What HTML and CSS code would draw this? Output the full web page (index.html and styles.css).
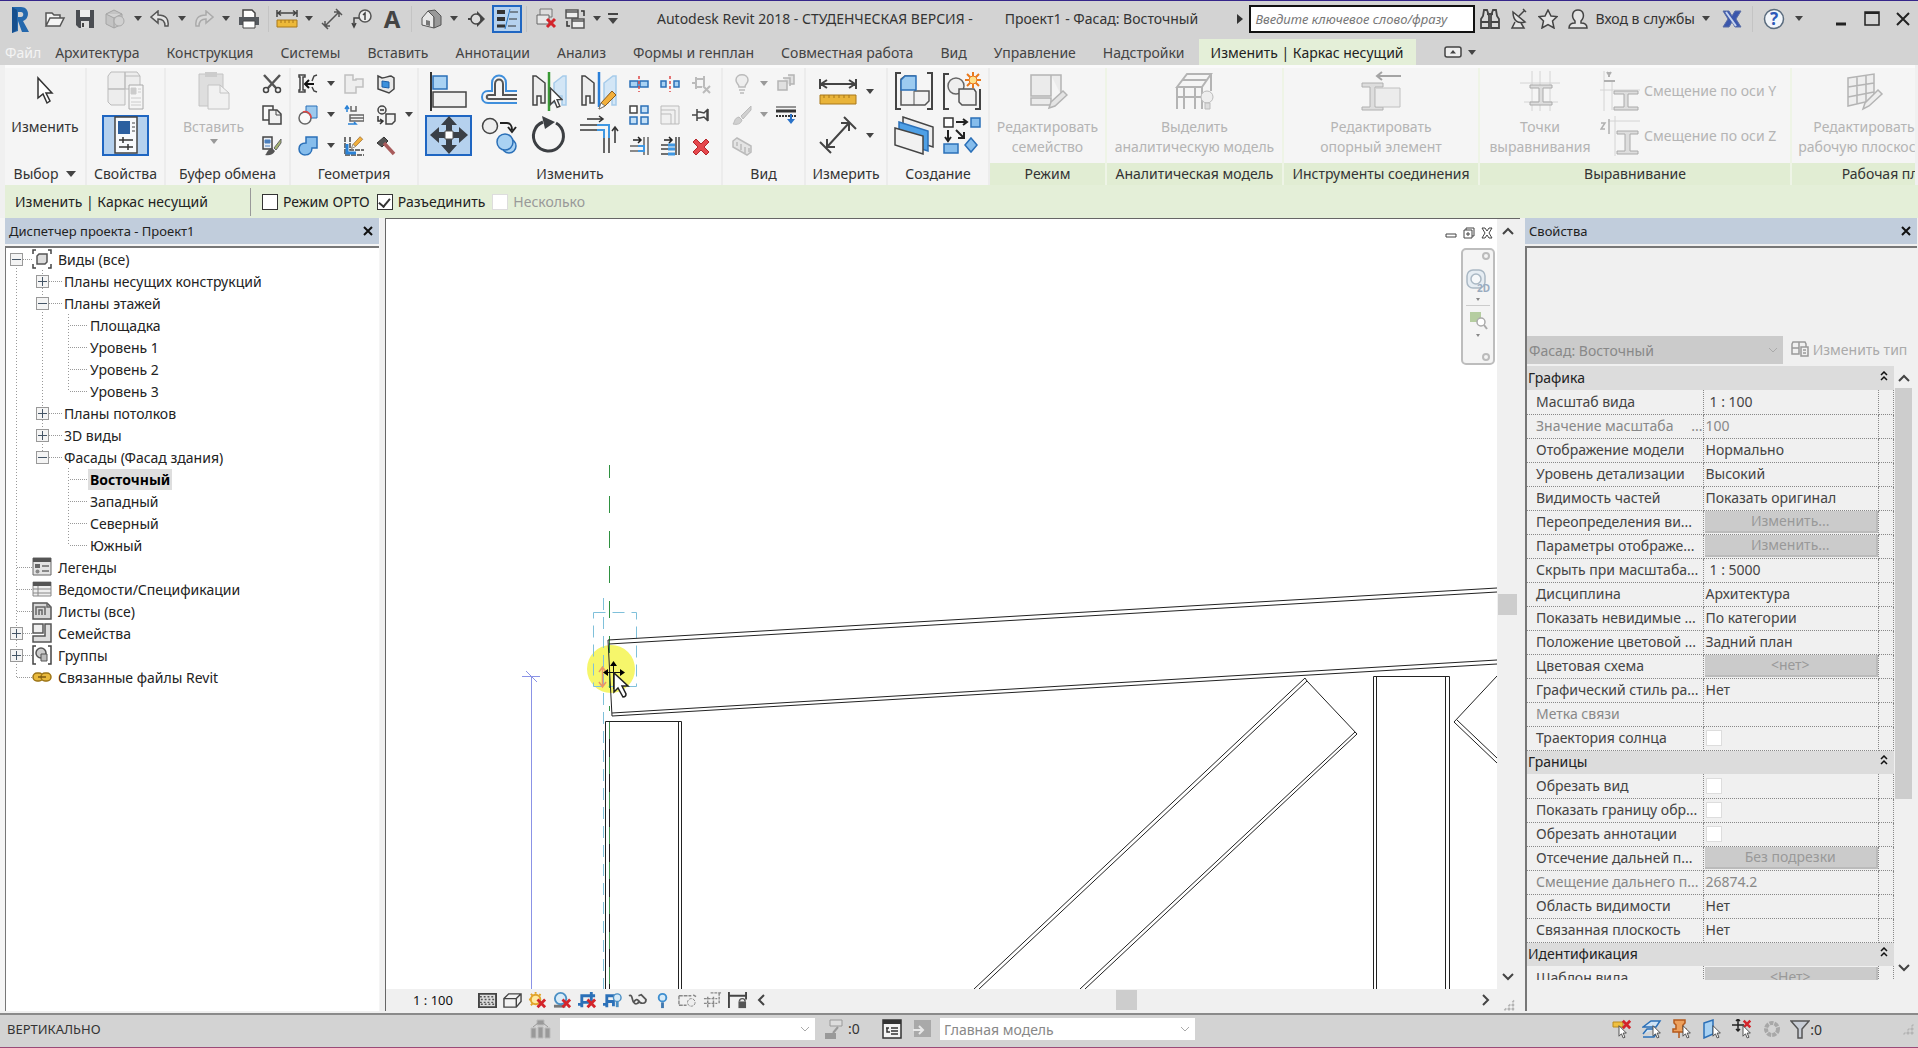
FILE: index.html
```
<!DOCTYPE html>
<html lang="ru">
<head>
    <meta charset="utf-8">
    <title>Autodesk Revit 2018</title>
    <link rel="stylesheet" href="styles.css">
</head>
<body>

<svg class="defs" aria-hidden="true">
    <symbol id="pointer" viewBox="0 0 12 20"><path d="M1 1v15l3.500-3.500 2.500 6 2.500-1-2.500-6h4.500z" fill="#fff" stroke="#444" stroke-width="1.300"/></symbol>
    <symbol id="cross" viewBox="0 0 12 12"><path d="M2 2l8 8M10 2l-8 8" stroke="#d3252b" stroke-width="3" fill="none"/></symbol>
    <symbol id="pencil" viewBox="0 0 20 20"><path d="M1 19l2-6L14 1l4 4L7 16z" fill="#f3b03c" stroke="#8a5a1c"/><path d="M1 19l2-6 4 3z" fill="#fff" stroke="#777"/></symbol>
</svg>

<header class="titlebar">
    <div class="quick">
        <button class="logo" aria-label="Revit"><svg width="20" height="30" viewBox="0 0 20 30"><path d="M2 3h9c9 0 9 12 2 14l6 11h-7L8 17v10l-6 2z" fill="#2468ad"/><path d="M8 8h3c3 0 3 5 0 5H8z" fill="#d3d3d3"/><path d="M2 3l5 3v20l-5 3z" fill="#174f8d"/></svg></button>
        <button aria-label="Открыть"><svg width="22" height="20" viewBox="0 0 22 20"><path d="M2 17V4h6l2 2h6v3M2 17l4-8h14l-4 8z" fill="#f4f4f4" stroke="#555" stroke-width="1.500"/></svg></button>
        <button aria-label="Сохранить"><svg width="20" height="20" viewBox="0 0 20 20"><path d="M1 1h18v18H4l-3-3z" fill="#4a4d52"/><path d="M5 1h10v7H5z" fill="#eee"/><path d="M6 12h8v7H6z" fill="#ddd"/><path d="M7 14h2v4H7z" fill="#444"/></svg></button>
        <button aria-label="Синхронизировать"><svg width="22" height="20" viewBox="0 0 22 20"><path d="M2 5l8-4 8 4v10l-8 4-8-4zM2 5l8 4 8-4M10 9v10" fill="#c4c4c4" stroke="#a4a4a4"/><circle cx="15" cy="12" r="5" fill="#d0d0d0" stroke="#aaa"/></svg></button>
        <button class="more" aria-label="Ещё"><i class="caret"></i></button>
        <button class="slim" aria-label="Отменить"><svg width="20" height="18" viewBox="0 0 20 18"><path d="M1 7l7-6v4c8 0 11 4 10 11h-3c0-5-2-7-7-7v4z" fill="#e4e4e4" stroke="#555" stroke-width="1.500"/></svg></button>
        <button class="more" aria-label="Ещё"><i class="caret"></i></button>
        <button class="slim" aria-label="Вернуть"><svg width="20" height="18" viewBox="0 0 20 18"><path d="M19 7l-7-6v4C4 5 1 9 2 16h3c0-5 2-7 7-7v4z" fill="#d8d8d8" stroke="#aaa" stroke-width="1.500"/></svg></button>
        <button class="more" aria-label="Ещё"><i class="caret"></i></button>
        <button aria-label="Печать"><svg width="22" height="20" viewBox="0 0 22 20"><path d="M5 8V1h9l3 3v4" fill="#fff" stroke="#444" stroke-width="1.500"/><path d="M1 8h20v8H1z" fill="#55595e"/><path d="M5 12h12v7H5z" fill="#fff" stroke="#444"/></svg></button>
        <i class="sep"></i>
        <button class="slim" aria-label="Измерить"><svg width="22" height="20" viewBox="0 0 22 20"><path d="M1 1v7M21 1v7M2 4h18M5 1.500L2 4l3 2.500M17 1.500L20 4l-3 2.500" stroke="#444" stroke-width="1.500" fill="none"/><path d="M1 11h20v7H1z" fill="#edb93a" stroke="#a9791b"/><path d="M5 11v3M9 11v3M13 11v3M17 11v3" stroke="#a9791b"/></svg></button>
        <button class="more" aria-label="Ещё"><i class="caret"></i></button>
        <button aria-label="Размер"><svg width="22" height="22" viewBox="0 0 22 22"><path d="M4 18L18 4M4 13v5h5M13 4h5v5M1 15l6 6M15 1l6 6" stroke="#555" stroke-width="1.500" fill="none"/></svg></button>
        <button aria-label="Марка"><svg width="22" height="20" viewBox="0 0 22 20"><circle cx="14" cy="7" r="6" fill="#eee" stroke="#555" stroke-width="1.500"/><path d="M12 6l2-2v7M8 9H3v8M1 14l2 4 2-4" fill="none" stroke="#444" stroke-width="1.500"/></svg></button>
        <button class="letter">A</button>
        <i class="sep"></i>
        <button aria-label="3D вид"><svg width="22" height="20" viewBox="0 0 22 20"><path d="M2 9l6-7 6 6v11l-12-3z" fill="#e8e8e8" stroke="#555"/><path d="M8 2l7-1 6 6v9l-7 3V8z" fill="#999" stroke="#555"/><path d="M6 11l4 1v5l-4-1z" fill="#777"/></svg></button>
        <button class="more" aria-label="Ещё"><i class="caret"></i></button>
        <button aria-label="Разрез"><svg width="20" height="18" viewBox="0 0 20 18"><path d="M10 1l8 8-8 8z" fill="#444"/><circle cx="9" cy="9" r="5" fill="#ddd" stroke="#444" stroke-width="1.500"/><path d="M1 9h3" stroke="#444" stroke-width="2"/></svg></button>
        <button class="on" aria-label="Тонкие линии"><svg width="24" height="22" viewBox="0 0 24 22"><path d="M2 4h8M2 11h8" stroke="#333" stroke-width="4"/><path d="M2 18h8" stroke="#333" stroke-width="3"/><path d="M15 4h8M14 11h8M13 18h8" stroke="#333"/><path d="M15 1l-5 20" stroke="#2475c4"/></svg></button>
        <i class="sep"></i>
        <button aria-label="Закрыть скрытые"><svg width="22" height="22" viewBox="0 0 22 22"><path d="M5 1h12v8H5z" fill="#ddd" stroke="#777"/><path d="M2 7h12v9H2z" fill="#e8e8e8" stroke="#666"/><use href="#cross" x="10" y="9" width="12" height="12"/></svg></button>
        <button class="slim" aria-label="Переключить окна"><svg width="22" height="22" viewBox="0 0 22 22"><path d="M2 2h12v8H2zM2 4h12" fill="#eee" stroke="#555" stroke-width="1.500"/><path d="M8 11h12v9H8zM8 13h12" fill="#eee" stroke="#555" stroke-width="1.500"/><path d="M17 3h3v5M3 13v5h3" fill="none" stroke="#333" stroke-width="1.500"/></svg></button>
        <button class="more" aria-label="Ещё"><i class="caret"></i></button>
        <button class="more" aria-label="Настройка панели"><i class="bar"></i><i class="caret big"></i></button>
    </div>
    <div class="caption"><span>Autodesk Revit 2018 - СТУДЕНЧЕСКАЯ ВЕРСИЯ -</span><span>Проект1 - Фасад: Восточный</span></div>
    <i class="play"></i>
    <input class="search" type="text" placeholder="Введите ключевое слово/фразу" aria-label="Поиск">
    <div class="service">
        <button aria-label="Найти"><svg width="20" height="22" viewBox="0 0 20 22"><path d="M3 8l1-6h3l2 6v12H1v-9zM17 8l-1-6h-3l-2 6v12h8v-9zM7 6h6M1 14h8M11 14h8" fill="#d8d8d8" stroke="#444" stroke-width="1.800"/></svg></button>
        <button aria-label="Центр связи"><svg width="18" height="22" viewBox="0 0 18 22"><path d="M3 4c0 9 5 12 12 10zM9 8l6-6M13 1l3 3M5 14l-3 6h12l-3-5" fill="#e4e4e4" stroke="#444" stroke-width="1.500"/></svg></button>
        <button aria-label="Избранное"><svg width="20" height="20" viewBox="0 0 20 20"><path d="M10 1l3 6 6 .6-4.500 4.400L16 19l-6-3.500L4 19l1.500-7L1 7.600 7 7z" fill="#e4e4e4" stroke="#444" stroke-width="1.500"/></svg></button>
        <button class="signin"><svg width="20" height="22" viewBox="0 0 20 22"><path d="M1 20c0-4 3-5 6-5v-2C3 9 4 2 10 2s7 7 3 11v2c3 0 6 1 6 5z" fill="#e4e4e4" stroke="#444" stroke-width="1.500"/></svg>Вход в службы<i class="caret"></i></button>
        <button aria-label="Exchange"><svg width="20" height="20" viewBox="0 0 20 20"><path d="M1 2h6l3 5 3-5h6l-5 8 5 8h-6l-3-5-3 5H1l5-8z" fill="#3b57ad" stroke="#5b6ea5"/><path d="M4 3l10 14" stroke="#c7d4ee" stroke-width="2"/></svg></button>
        <i class="sep"></i>
        <button aria-label="Справка"><svg width="22" height="22" viewBox="0 0 22 22"><circle cx="11" cy="11" r="9.500" fill="#f2f6fb" stroke="#5a6b7d" stroke-width="1.500"/><text class="q" x="11" y="17" text-anchor="middle">?</text></svg></button>
        <button class="more" aria-label="Ещё"><i class="caret"></i></button>
    </div>
    <div class="window">
        <button aria-label="Свернуть"><svg width="14" height="16" viewBox="0 0 14 16"><path d="M2 13h10" stroke="#222" stroke-width="3"/></svg></button>
        <button aria-label="Развернуть"><svg width="16" height="16" viewBox="0 0 16 16"><path d="M1 1h14v13H1z" fill="none" stroke="#222" stroke-width="1.500"/><path d="M1 2h14" stroke="#222" stroke-width="2"/></svg></button>
        <button aria-label="Закрыть"><svg width="16" height="16" viewBox="0 0 16 16"><path d="M2 2l12 12M14 2L2 14" stroke="#222" stroke-width="2"/></svg></button>
    </div>
</header>

<nav class="tabs">
    <a class="file" href="#">Файл</a>
    <a href="#">Архитектура</a>
    <a href="#">Конструкция</a>
    <a href="#">Системы</a>
    <a href="#">Вставить</a>
    <a href="#">Аннотации</a>
    <a href="#">Анализ</a>
    <a href="#">Формы и генплан</a>
    <a href="#">Совместная работа</a>
    <a href="#">Вид</a>
    <a href="#">Управление</a>
    <a href="#">Надстройки</a>
    <a class="current" href="#">Изменить | Каркас несущий</a>
    <button class="collapse" aria-label="Свернуть ленту"><svg width="18" height="12" viewBox="0 0 18 12"><rect x="1" y="1" width="16" height="10" rx="2" fill="#eee" stroke="#444" stroke-width="1.500"/><path d="M6 7.500h6L9 4z" fill="#444"/></svg><i class="caret"></i></button>
</nav>

<div class="ribbon">
    <section class="panel">
        <div class="body">
            <button class="large"><svg width="40" height="40" viewBox="0 0 40 40"><path d="M13 7v20l5-4 4 9 3-2-4-8h6z" fill="#fff" stroke="#333" stroke-width="1.500"/></svg>Изменить</button>
        </div>
        <h2>Выбор <i class="caret big"></i></h2>
    </section>

    <section class="panel">
        <div class="body">
            <div class="pair one">
                <button disabled aria-label="Свойства типа"><svg width="40" height="40" viewBox="0 0 40 40"><path d="M2 5l3-4h14v17H2zM19 1h12l3 4v13H19zM2 18h17v16H5l-3-3zM19 5h15" fill="#ededed" stroke="#bbb"/><path d="M23 14h14v24H23z" fill="#f5f5f5" stroke="#aaa"/><path d="M25 17h5v6h-5zM32 18h3M32 21h3M25 27h10M25 31h10M25 34h10" fill="#ccc" stroke="#ccc"/></svg></button>
                <button class="on" aria-label="Свойства"><svg width="40" height="40" viewBox="0 0 40 40"><path d="M9 2h22v36H9z" fill="#f7f9fb" stroke="#444" stroke-width="1.500"/><path d="M12 6h12v13H12z" fill="#2b5f9f"/><path d="M26 8h3M26 12h3M26 16h3" stroke="#444"/><path d="M13 25h14M17 22v6M13 32h14M22 29v6" stroke="#333" stroke-width="1.500"/></svg></button>
            </div>
        </div>
        <h2>Свойства</h2>
    </section>

    <section class="panel">
        <div class="body">
            <button class="large paste" disabled><svg width="40" height="40" viewBox="0 0 40 40"><path d="M5 3h24v32H5z" fill="#dedede" stroke="#c4c4c4"/><path d="M11 1h12v5H11z" fill="#ccc"/><path d="M14 14h12l9 8v16H14z" fill="#f1f1f1" stroke="#c4c4c4"/><path d="M26 14v8h9" fill="none" stroke="#c4c4c4"/></svg>Вставить<i class="caret"></i></button>
            <div class="small clip">
                <button aria-label="Вырезать"><svg viewBox="0 0 20 20"><path d="M2 1l12 13M18 1L6 14" stroke="#555" stroke-width="2.500"/><circle cx="4" cy="16" r="2.500" fill="none" stroke="#444" stroke-width="1.500"/><circle cx="16" cy="16" r="2.500" fill="none" stroke="#444" stroke-width="1.500"/></svg></button>
                <button aria-label="Копировать"><svg viewBox="0 0 20 20"><path d="M1 1h10v14H1z" fill="#f8f8f8" stroke="#444" stroke-width="1.500"/><path d="M7 5h8l4 4v10H7z" fill="#f0f0f0" stroke="#444" stroke-width="1.500"/><path d="M14 5v5h5" fill="none" stroke="#444"/></svg></button>
                <button aria-label="Копировать свойства"><svg viewBox="0 0 20 20"><path d="M1 1h9v12H1z" fill="#e8eef5" stroke="#444" stroke-width="1.500"/><path d="M3 4h5v3H3zM3 10h5" fill="#4a7fbd" stroke="#4a7fbd"/><path d="M3 19c2-1 2-6 7-7l3 3c-2 4-6 5-10 4z" fill="#555"/><path d="M12 12l7-9v4l-5 7z" fill="#a6b66f" stroke="#666"/></svg></button>
            </div>
        </div>
        <h2>Буфер обмена</h2>
    </section>

    <section class="panel">
        <div class="body">
            <div class="small geometry">
                <button aria-label="Подрезка"><svg viewBox="0 0 20 20"><path d="M1 1h6v2H5v13h2v2H1v-2h1V3H1zM19 1l-3 1-2 5M19 18l-3-1-2-4" fill="none" stroke="#444" stroke-width="1.500"/><path d="M16 10H8M11 6l-4 4 4 4" fill="none" stroke="#111" stroke-width="2"/></svg></button>
                <button aria-label="Ещё"><i class="caret"></i></button>
                <button disabled aria-label="Сопряжение"><svg viewBox="0 0 20 20"><path d="M1 1h8v5h3V5h7v8h-7v6H1z" fill="#eee" stroke="#c0c0c0" stroke-width="1.500"/></svg></button>
                <button aria-label="Разделить грань"><svg viewBox="0 0 20 20"><path d="M2 2l4 2c4 0 6-2 9-2l3 2v11l-5 4-11-4z" fill="#e8e8e8" stroke="#444" stroke-width="1.500"/><path d="M6 7l7 1v6l-7-1z" fill="#3c90dc" stroke="#1d5fa8"/></svg></button>
                <span></span>
                <button aria-label="Вырезать геометрию"><svg viewBox="0 0 20 20"><path d="M8 1h11v12H8z" fill="#9cc9ee" stroke="#2b70b8"/><circle cx="7" cy="13" r="6" fill="#fafafa" stroke="#666" stroke-width="1.500"/><path d="M5 7a6 6 0 018 6" fill="none" stroke="#e04747" stroke-width="1.500"/></svg></button>
                <button aria-label="Ещё"><i class="caret"></i></button>
                <button aria-label="Соединение стен"><svg viewBox="0 0 20 20"><path d="M7 1v5h5V1M6 10h14v6H6zM6 13h14" fill="none" stroke="#666" stroke-width="1.500"/><path d="M3 1v6M1 4l2-3 2 3M4 19h8l-2-2" fill="none" stroke="#2a82d6" stroke-width="1.500"/></svg></button>
                <button aria-label="Демонтаж"><svg viewBox="0 0 20 20"><circle cx="6" cy="5" r="4" fill="#eee" stroke="#444" stroke-width="1.500"/><path d="M4 5h4M2 11v5h4M4 14l3 2-3 3" fill="none" stroke="#333" stroke-width="1.500"/><path d="M10 9h9v7l-3 3h-6z" fill="#f2f2f2" stroke="#444" stroke-width="1.500"/></svg></button>
                <button aria-label="Ещё"><i class="caret"></i></button>
                <button aria-label="Соединить"><svg viewBox="0 0 20 20"><path d="M8 1h11v11h-5c0 9-13 9-13 1 0-4 3-6 7-6z" fill="#86bdec" stroke="#2b70b8" stroke-width="1.500"/></svg></button>
                <button aria-label="Ещё"><i class="caret"></i></button>
                <button aria-label="Обрезать"><svg viewBox="0 0 20 20"><path d="M1 1v18h19M6 1v13h14" fill="none" stroke="#444" stroke-width="1.500" stroke-dasharray="5 1"/><path d="M3 8v9h9" fill="none" stroke="#2a82d6" stroke-width="3"/><use href="#pencil" x="7" y="0" width="13" height="13"/></svg></button>
                <button aria-label="Снести"><svg viewBox="0 0 20 20"><path d="M1 7l7-6 4 4-6 6z" fill="#555" stroke="#333"/><path d="M8 7l10 11" stroke="#a85b5b" stroke-width="3.500"/></svg></button>
            </div>
        </div>
        <h2>Геометрия</h2>
    </section>

    <section class="panel modify">
        <div class="body">
            <div class="pair four">
                <button aria-label="Выровнять"><svg width="40" height="40" viewBox="0 0 40 40"><path d="M2 1v39" stroke="#333" stroke-width="2"/><path d="M4 5h14v13H4z" fill="#a9d2f3" stroke="#2b70b8" stroke-width="1.500"/><path d="M4 21h33v15H4z" fill="#f0f0f0" stroke="#444" stroke-width="1.500"/></svg></button>
                <button aria-label="Смещение"><svg width="40" height="40" viewBox="0 0 40 40"><path d="M38 20H27v-8c0-10-14-10-14 0v8H9c-8 0-8 12 0 12h29M38 28H10" fill="none" stroke="#3f8fdc" stroke-width="2"/><path d="M38 24H24V13c0-6-8-6-8 0v11h-6c-3 0-3 4 0 4h28" fill="none" stroke="#555" stroke-width="2"/></svg></button>
                <button aria-label="Зеркало - выбрать ось"><svg width="40" height="40" viewBox="0 0 40 40"><path d="M4 5h3l9 7v20h-4v-7H8v9H4z" fill="#eee" stroke="#444" stroke-width="1.500"/><path d="M37 5h-3l-9 7v20h4v-7h4v9h4z" fill="#d3e6f6" stroke="#a6cbea" stroke-width="1.500"/><path d="M20 1v39" stroke="#3a9a35" stroke-width="2.500"/><use href="#pointer" x="20" y="16" width="14" height="22"/></svg></button>
                <button aria-label="Зеркало - нарисовать ось"><svg width="40" height="40" viewBox="0 0 40 40"><path d="M3 5h3l9 7v20h-4v-7H7v9H3z" fill="#eee" stroke="#444" stroke-width="1.500"/><path d="M37 5h-3l-9 7v20h4v-7h4v9h4z" fill="#d3e6f6" stroke="#a6cbea" stroke-width="1.500"/><path d="M20 1v35" stroke="#2a7fd8" stroke-width="2.500"/><use href="#pencil" x="19" y="19" width="20" height="20"/></svg></button>
                <button class="on" aria-label="Переместить"><svg width="40" height="40" viewBox="0 0 40 40"><path d="M20 1l8 9h-5v6h-6v-6h-5zM20 39l8-9h-5v-6h-6v6h-5zM1 20l9-8v5h6v6h-6v5zM39 20l-9-8v5h-6v6h6v5z" fill="#3a3f46"/><path d="M16 16h8v8h-8z" fill="#fff" stroke="#555"/></svg></button>
                <button aria-label="Копировать"><svg width="40" height="40" viewBox="0 0 40 40"><circle cx="11" cy="11" r="7.500" fill="#eee" stroke="#444" stroke-width="1.500"/><path d="M21 8h7c3 0 5 3 5 7M29 12l4 5 4-5" fill="none" stroke="#222" stroke-width="2"/><circle cx="30" cy="31" r="7" fill="#a9d2f3" stroke="#2b70b8" stroke-width="1.500"/><circle cx="26" cy="27" r="8" fill="#a9d2f3" stroke="#2b70b8" stroke-width="1.500"/></svg></button>
                <button aria-label="Повернуть"><svg width="40" height="40" viewBox="0 0 40 40"><path d="M27 8a15 15 0 11-13-1" fill="none" stroke="#3c3f43" stroke-width="3"/><path d="M13 1l13 6-10 7z" fill="#3c3f43"/></svg></button>
                <button aria-label="Обрезать или удлинить"><svg width="40" height="40" viewBox="0 0 40 40"><path d="M1 10h19M1 15h17M25 22v16M30 22v16" fill="none" stroke="#666" stroke-width="2"/><path d="M18 10h12v13M18 15h7v8" fill="none" stroke="#3f97e2" stroke-width="2"/><path d="M8 4h16M20 1l4 3-4 3M36 28V12M33 16l3-4 3 4" fill="none" stroke="#333" stroke-width="1.500"/></svg></button>
            </div>
            <div class="small three">
                <button aria-label="Разделить"><svg viewBox="0 0 20 20"><path d="M1 7h8v6H1zM11 7h8v6h-8z" fill="#a9d2f3" stroke="#2b70b8" stroke-width="1.500"/><path d="M10 2v16" stroke="#e04747" stroke-width="1.500" stroke-dasharray="3 2"/></svg></button>
                <button aria-label="Разделить с зазором"><svg viewBox="0 0 20 20"><path d="M1 7h5v6H1zM14 7h5v6h-5z" fill="#a9d2f3" stroke="#2b70b8" stroke-width="1.500"/><path d="M10 2v16" stroke="#e04747" stroke-width="1.500" stroke-dasharray="3 2"/></svg></button>
                <button disabled aria-label="Открепить"><svg viewBox="0 0 20 20"><path d="M1 9h4M5 3v12M5 5h8M13 2v10M5 13h6M12 12l7 7M19 12l-7 7" fill="none" stroke="#bbb" stroke-width="2"/></svg></button>
                <button aria-label="Массив"><svg viewBox="0 0 20 20"><path d="M1 1h7v7H1z" fill="#fff" stroke="#444" stroke-width="1.500"/><path d="M12 1h7v7h-7zM1 12h7v7H1zM12 12h7v7h-7z" fill="#c4e0f7" stroke="#2b70b8" stroke-width="1.500"/></svg></button>
                <button disabled aria-label="Масштаб"><svg viewBox="0 0 20 20"><path d="M1 1h18v18H1z" fill="#f0f0f0" stroke="#bbb"/><path d="M1 9h10v10M1 5h14v14" fill="none" stroke="#bbb"/></svg></button>
                <button aria-label="Закрепить"><svg viewBox="0 0 20 20"><path d="M1 10h5M6 4v12M6 7h3l4 1 3-3v10l-3-3-4 1H6M17 4v12" fill="none" stroke="#444" stroke-width="1.500"/></svg></button>
                <button aria-label="Удлинить один"><svg viewBox="0 0 20 20"><path d="M1 10h10M1 15h10M15 1v18M19 1v18" stroke="#666" stroke-width="1.500"/><path d="M9 10h6v5H9" fill="none" stroke="#3f97e2" stroke-width="2"/><path d="M4 4h8M9 1l3 3-3 3" fill="none" stroke="#222" stroke-width="1.500"/></svg></button>
                <button aria-label="Удлинить несколько"><svg viewBox="0 0 20 20"><path d="M1 9h10M1 13h10M1 18h10M16 1v18M19 1v18" stroke="#444" stroke-width="1.500"/><path d="M8 9h7M8 13h7M8 18h7" fill="none" stroke="#3f97e2" stroke-width="3"/><path d="M4 4h8M9 1l3 3-3 3" fill="none" stroke="#222" stroke-width="1.500"/></svg></button>
                <button aria-label="Удалить"><svg viewBox="0 0 20 20"><path d="M5 3l5 5 5-5 3 3-5 5 5 5-3 3-5-5-5 5-3-3 5-5-5-5z" fill="#e5484d" stroke="#b5262b"/></svg></button>
            </div>
        </div>
        <h2>Изменить</h2>
    </section>

    <section class="panel">
        <div class="body">
            <div class="small view">
                <button disabled aria-label="Скрыть"><svg viewBox="0 0 20 20"><path d="M7 13c0-3-3-3-3-7 0-7 12-7 12 0 0 4-3 4-3 7zM7 16h6M8 19h4" fill="#eee" stroke="#bbb" stroke-width="1.500"/></svg></button>
                <button disabled aria-label="Ещё"><i class="caret"></i></button>
                <button disabled aria-label="Вытеснить"><svg viewBox="0 0 20 20"><path d="M2 7h9v9H2zM7 4h7v8M12 1h6v9h-4" fill="#e0e0e0" stroke="#b4b4b4" stroke-width="1.500"/></svg></button>
                <button disabled aria-label="Переопределить"><svg viewBox="0 0 20 20"><path d="M1 19c2-2 1-6 6-7l3 3c-1 4-5 5-9 4zM9 11L19 1v4l-8 9z" fill="#d0d0d0" stroke="#bbb"/></svg></button>
                <button disabled aria-label="Ещё"><i class="caret"></i></button>
                <button aria-label="Линии"><svg viewBox="0 0 20 20"><path d="M0 2h20" stroke="#333"/><path d="M0 6h20" stroke="#333" stroke-width="3"/><path d="M0 11h20" stroke="#333" stroke-width="2" stroke-dasharray="2 1"/><path d="M16 9v5h3l-4 5-4-5h3V9z" fill="#2a72c8"/></svg></button>
                <button disabled aria-label="Блок"><svg viewBox="0 0 20 20"><path d="M1 5l4-3 14 8v6l-4 3L1 11zM5 6v4M9 8v6M13 11v6M17 12v4" fill="#e4e4e4" stroke="#bbb" stroke-width="1.500"/></svg></button>
            </div>
        </div>
        <h2>Вид</h2>
    </section>

    <section class="panel">
        <div class="body">
            <div class="pair measure">
                <button aria-label="Измерить"><svg width="40" height="40" viewBox="0 0 40 40"><path d="M2 8v10M38 8v10M3 13h34M9 9l-6 4 6 4M31 9l6 4-6 4" fill="none" stroke="#444" stroke-width="2"/><path d="M2 24h36v9H2z" fill="#e9b43a" stroke="#a9791b"/><path d="M6 24v3M11 24v3M16 24v3M21 24v3M26 24v3M31 24v3" stroke="#a9791b"/></svg></button>
                <button aria-label="Ещё"><i class="caret"></i></button>
                <button aria-label="Размер"><svg width="40" height="40" viewBox="0 0 40 40"><path d="M9 32L31 8M9 24v8h8M23 8h8v8M2 27l11 11M26 2l12 12" fill="none" stroke="#444" stroke-width="2"/></svg></button>
                <button aria-label="Ещё"><i class="caret"></i></button>
            </div>
        </div>
        <h2>Измерить</h2>
    </section>

    <section class="panel">
        <div class="body">
            <div class="pair two">
                <button aria-label="Создать группу"><svg width="40" height="40" viewBox="0 0 40 40"><path d="M7 2H2v36h5M33 2h5v36h-5" fill="none" stroke="#444" stroke-width="2"/><path d="M7 8l4-3h10v15h14v10l-4 4H7z" fill="#f1f1f1" stroke="#555" stroke-width="1.500"/><path d="M7 9l4-4h11v14H7z" fill="#9ccbf0" stroke="#2b70b8" stroke-width="1.500"/><path d="M20 20v14" stroke="#555"/></svg></button>
                <button aria-label="Создать подобный"><svg width="40" height="40" viewBox="0 0 40 40"><path d="M7 3H2v35h5M33 38h5V18" fill="none" stroke="#444" stroke-width="2"/><circle cx="14" cy="15" r="8" fill="#eee" stroke="#666" stroke-width="1.500"/><path d="M17 18h15l2 3v13H20l-3-3z" fill="#f1f1f1" stroke="#555" stroke-width="1.500"/><path d="M31 1v16M23 9h16M25 3l12 12M37 3L25 15" stroke="#e8791d" stroke-width="2"/><circle cx="31" cy="9" r="4" fill="#ffe08a" stroke="#e8791d"/></svg></button>
                <button aria-label="Создать сборку"><svg width="40" height="40" viewBox="0 0 40 40"><path d="M9 2l30 10v20L9 22z" fill="#eee" stroke="#444" stroke-width="1.500"/><path d="M5 7l29 9v20L5 27z" fill="#4ea0e6" stroke="#2b70b8" stroke-width="1.500"/><path d="M1 13l28 8v18L1 30z" fill="#f1f1f1" stroke="#444" stroke-width="1.500"/></svg></button>
                <button aria-label="Создать части"><svg width="40" height="40" viewBox="0 0 40 40"><path d="M2 3h9v9H2z" fill="#fff" stroke="#333" stroke-width="1.500"/><path d="M29 3h9v9h-9zM2 29h14v9H2zM29 23l6 7-6 7-6-7z" fill="#86bdec" stroke="#2b70b8" stroke-width="1.500"/><path d="M14 7h11M21 4l4 3-4 3M6 15v10M3 22l3 4 3-4M14 15l8 8M22 17v6h-6" fill="none" stroke="#222" stroke-width="2"/></svg></button>
            </div>
        </div>
        <h2>Создание</h2>
    </section>

    <section class="panel context">
        <div class="body">
            <button class="large" disabled><svg width="40" height="40" viewBox="0 0 40 40"><path d="M3 4h20v21H3zM3 27h20v7H3zM23 4h10v20" fill="#ebebeb" stroke="#b4b4b4" stroke-width="1.500"/><path d="M21 37l2-6 12-11 4 4-12 11z" fill="#e4e4e4" stroke="#b4b4b4" stroke-width="1.500"/></svg>Редактировать<br>семейство</button>
        </div>
        <h2>Режим</h2>
    </section>

    <section class="panel context">
        <div class="body">
            <button class="large" disabled><svg width="40" height="40" viewBox="0 0 40 40"><path d="M2 16L12 3h24l-9 13zM2 16v22M9 16v22M20 16v22M27 16v22M36 3v17M2 26h25M8 9h24" fill="none" stroke="#b4b4b4" stroke-width="2"/><circle cx="32" cy="26" r="6" fill="#eee" stroke="#bbb"/><path d="M30 32h5v6h-5z" fill="#ddd" stroke="#bbb"/></svg>Выделить<br>аналитическую модель</button>
        </div>
        <h2>Аналитическая модель</h2>
    </section>

    <section class="panel context">
        <div class="body">
            <button class="large" disabled><svg width="40" height="40" viewBox="0 0 40 40"><path d="M17 5h23M21 1l-5 4 5 4" fill="none" stroke="#a4a4a4" stroke-width="2"/><path d="M1 12h21v4h-8v20h8v3H1v-3h8V16H1z" fill="#ddd" stroke="#b0b0b0"/><path d="M15 17h24v19H15" fill="#ececec" stroke="#c0c0c0"/></svg>Редактировать<br>опорный элемент</button>
        </div>
        <h2>Инструменты соединения</h2>
    </section>

    <section class="panel context">
        <div class="body">
            <button class="large points" disabled><svg width="40" height="40" viewBox="0 0 40 40"><path d="M12 0v40M20 0v40M30 0v40M0 12h40M4 31h34" stroke="#d4d4d4"/><path d="M10 14h22v3h-9v14h9v3H10v-3h9V17h-9z" fill="#ddd" stroke="#aaa"/></svg>Точки<br>выравнивания</button>
            <div class="offsets">
                <button disabled><svg width="40" height="40" viewBox="0 0 40 40"><path d="M4 0v40M0 19h40M12 9v30" stroke="#d4d4d4"/><path d="M4 10h11M9 1v5M7 1l2 3 2-3" stroke="#b0b0b0" stroke-width="2" fill="none"/><path d="M14 20h24v3H28v13h10v3H14v-3h10V23H14z" fill="#ddd" stroke="#aaa"/></svg>Смещение по оси Y</button>
                <button disabled><svg width="40" height="40" viewBox="0 0 40 40"><path d="M15 0v40M8 5h32" stroke="#d4d4d4"/><path d="M9 3v15M1 7h4l-4 6h4" stroke="#b0b0b0" stroke-width="1.500" fill="none"/><path d="M17 15h21v3h-8v17h8v3H17v-3h8V18h-8z" fill="#ddd" stroke="#aaa"/></svg>Смещение по оси Z</button>
            </div>
        </div>
        <h2>Выравнивание</h2>
    </section>

    <section class="panel context">
        <div class="body">
            <button class="large plane" disabled><svg width="40" height="40" viewBox="0 0 40 40"><path d="M4 7l26-4v26L4 35zM4 16l26-4M4 26l26-5M13 6v27M22 5v26" fill="#eee" stroke="#b4b4b4" stroke-width="1.500"/><path d="M19 38l2-6 13-13 4 4-13 12z" fill="#eee" stroke="#b4b4b4" stroke-width="1.500"/></svg>Редактировать<br>рабочую плоскость</button>
        </div>
        <h2>Рабочая плоскость</h2>
    </section>
</div>

<div class="options">
    <span class="mode">Изменить | Каркас несущий</span>
    <label><input type="checkbox"> Режим ОРТО</label>
    <label><input type="checkbox" checked> Разъединить</label>
    <label class="off"><input type="checkbox" disabled> Несколько</label>
</div>

<main class="workspace">
    <aside class="dock browser">
        <div class="dock-title">Диспетчер проекта - Проект1<button aria-label="Закрыть"><svg width="12" height="12" viewBox="0 0 12 12"><path d="M2 2l8 8M10 2L2 10" stroke="#111" stroke-width="2"/></svg></button></div>
        <div class="tree">
            <ul class="root">
                <li><div class="node"><button class="exp minus" aria-label="Свернуть"></button><i class="twig"></i><svg viewBox="0 0 20 20"><path d="M4 1H1v4M16 1h3v4M4 19H1v-4M16 19h3v-4" fill="none" stroke="#444" stroke-width="1.500"/><path d="M5 7l2-2h8v8l-2 2H5z" fill="#ddd" stroke="#555" stroke-width="1.500"/></svg><span>Виды (все)</span></div>
                    <ul class="second">
                        <li><div class="node"><button class="exp plus" aria-label="Развернуть"></button><i class="twig wide"></i><span>Планы несущих конструкций</span></div></li>
                        <li><div class="node"><button class="exp minus" aria-label="Свернуть"></button><i class="twig wide"></i><span>Планы этажей</span></div>
                            <ul class="third">
                                <li class="node"><span>Площадка</span></li>
                                <li class="node"><span>Уровень 1</span></li>
                                <li class="node"><span>Уровень 2</span></li>
                                <li class="node"><span>Уровень 3</span></li>
                            </ul>
                        </li>
                        <li><div class="node"><button class="exp plus" aria-label="Развернуть"></button><i class="twig wide"></i><span>Планы потолков</span></div></li>
                        <li><div class="node"><button class="exp plus" aria-label="Развернуть"></button><i class="twig wide"></i><span>3D виды</span></div></li>
                        <li><div class="node"><button class="exp minus" aria-label="Свернуть"></button><i class="twig wide"></i><span>Фасады (Фасад здания)</span></div>
                            <ul class="third">
                                <li class="node"><span class="picked">Восточный</span></li>
                                <li class="node"><span>Западный</span></li>
                                <li class="node"><span>Северный</span></li>
                                <li class="node"><span>Южный</span></li>
                            </ul>
                        </li>
                    </ul>
                </li>
                <li class="node"><i class="twig long"></i><svg viewBox="0 0 20 20"><path d="M1 1h18v17H1z" fill="#e4e4e4" stroke="#666"/><path d="M1 1h18v4H1z" fill="#555"/><path d="M3 7h5v4H3z" fill="#666"/><circle cx="5.500" cy="14.500" r="2" fill="#888"/><path d="M10 9h7M10 14h7" stroke="#888" stroke-width="2"/></svg><span>Легенды</span></li>
                <li class="node"><i class="twig long"></i><svg viewBox="0 0 20 20"><path d="M1 3h18v14H1zM1 10h18M1 14h18M6 6v11" fill="#eee" stroke="#888"/><path d="M1 3h18v4H1z" fill="#555"/></svg><span>Ведомости/Спецификации</span></li>
                <li class="node"><i class="twig long"></i><svg viewBox="0 0 20 20"><path d="M1 2h14l4 4v12H1z" fill="#d8d8d8" stroke="#555" stroke-width="1.500"/><path d="M4 14V6h9v8M7 14V9h3v5M15 2v4h4" fill="none" stroke="#666" stroke-width="1.500"/></svg><span>Листы (все)</span></li>
                <li class="node"><button class="exp plus" aria-label="Развернуть"></button><i class="twig"></i><svg viewBox="0 0 20 20"><path d="M1 1h10v9H1z" fill="#eee" stroke="#555" stroke-width="1.500"/><path d="M13 1h6v18H1v-6h12z" fill="#ddd" stroke="#555" stroke-width="1.500"/></svg><span>Семейства</span></li>
                <li class="node"><button class="exp plus" aria-label="Развернуть"></button><i class="twig"></i><svg viewBox="0 0 20 20"><path d="M4 1H1v18h3M16 1h3v18h-3" fill="none" stroke="#444" stroke-width="1.500"/><circle cx="9" cy="8" r="5" fill="#ccc" stroke="#555" stroke-width="1.500"/><path d="M9 9h6v7H9z" fill="#bbb" stroke="#555"/></svg><span>Группы</span></li>
                <li class="node"><i class="twig long"></i><svg viewBox="0 0 20 20"><rect x="1" y="6" width="10" height="8" rx="4" fill="#e8b93c" stroke="#9c7416" stroke-width="1.500"/><rect x="9" y="6" width="10" height="8" rx="4" fill="#e8b93c" stroke="#9c7416" stroke-width="1.500"/><path d="M6 10h8" stroke="#7c5a10" stroke-width="1.500"/></svg><span>Связанные файлы Revit</span></li>
            </ul>
        </div>
    </aside>

    <section class="view-window">
        <div class="canvas">
            <svg class="drawing" width="100%" height="100%">
                <g transform="translate(-386 -219)">
                    <circle cx="611" cy="669" r="24" fill="#f6f66b"/>
                    <!-- selection outline and reference axis -->
                    <g class="ghost">
                        <path d="M593.500 612.500h43v74h-43z"/>
                        <path d="M603.500 598v391"/>
                    </g>
                    <path class="axis" d="M609.500 465v246"/>
                    <path class="dim" d="M531.500 676v313M522 676.500h18M526 671l11 11"/>
                    <g class="lines">
                        <!-- top chord -->
                        <path d="M608 640l889-52M609 644l888-52M612 713l885-53M612 716l885-52M608 640l4 76"/>
                        <!-- posts -->
                        <path d="M605.500 989V721.500h76V989M609.500 722v267M678.500 722v267"/>
                        <path d="M1373.500 989V676.500h76V989M1376.500 677v312M1445.500 677v312"/>
                        <!-- braces -->
                        <path d="M974 989l331-311 2 3-328 308M1307 681l50 53-272 255M1080 989l275-257M1357 734l-2-2"/>
                        <path d="M1497 676l-43 46 43 41M1457 720l40 38"/>
                    </g>
                    <path d="M609.500 722v267" stroke="#3f8f4f" stroke-dasharray="17 18"/>
                    <path d="M602.500 668v18M599 672l3.500-5 3.500 5M599 682l3.500 5 3.500-5" fill="none" stroke="#e8946a" stroke-width="1.500"/>
                    <path d="M604 672.500h20M613.500 662v27" stroke="#111"/>
                    <path d="M608 669l-5 3.500 5 3.500zM620 669l5 3.500-5 3.500zM610 666l3.500-5 3.500 5z"/>
                    <path d="M614 673v19l4-4 5 9q3 0 3-3l-4-8h6z" fill="#fff" stroke="#222" stroke-width="1.500"/>
                </g>
            </svg>
            <div class="mdi">
                <svg width="12" height="12" viewBox="0 0 12 12"><path d="M1 7h10v3H1z" fill="#fff" stroke="#444"/></svg>
                <svg width="12" height="12" viewBox="0 0 12 12"><path d="M3 3V1h8v8H9M1 3h8v8H1zM4 6h2v2H4z" fill="#fff" stroke="#444"/></svg>
                <svg width="12" height="12" viewBox="0 0 12 12"><path d="M1 1h3l2 3 2-3h3L8 6l3 5H8L6 8l-2 3H1l3-5z" fill="#fff" stroke="#444"/></svg>
            </div>
            <div class="navbar">
                <i class="knob"></i>
                <svg width="26" height="26" viewBox="0 0 26 26"><rect x="2" y="2" width="18" height="18" rx="6" fill="#e6edf3" stroke="#aab8c4" stroke-width="1.500"/><circle cx="11" cy="11" r="5" fill="#f6f8fa" stroke="#aab8c4" stroke-width="1.500"/><text class="two" x="12" y="24">2D</text></svg>
                <i class="caret"></i>
                <hr>
                <svg width="20" height="20" viewBox="0 0 20 20"><path d="M2 2h11v10H2z" fill="#b5cda0"/><circle cx="13" cy="12" r="4" fill="#fff" stroke="#aaa" stroke-width="1.500"/><path d="M16 15l3 4" stroke="#aaa" stroke-width="2"/></svg>
                <i class="caret"></i>
                <i class="knob last"></i>
            </div>
        </div>
        <div class="vscroll"><svg width="12" height="8" viewBox="0 0 12 8"><path d="M1 7l5-5 5 5"/></svg><i class="thumb"></i><svg width="12" height="8" viewBox="0 0 12 8"><path d="M1 1l5 5 5-5"/></svg></div>
        <div class="viewbar">
            <span class="scale">1 : 100</span>
            <button aria-label="Уровень детализации"><svg viewBox="0 0 20 20"><path d="M1 3h18v14H1z" fill="#ddd" stroke="#444" stroke-width="2"/><path d="M2 6h16M3 9h16M2 12h16M3 14h16" stroke="#555" stroke-width="1.500" stroke-dasharray="2 2"/></svg></button>
            <button aria-label="Визуальный стиль"><svg viewBox="0 0 20 20"><path d="M1 8l5-5h13v8l-5 6H1zM1 8h13v9M14 8l5-5" fill="#f2f2f2" stroke="#444" stroke-width="1.500"/></svg></button>
            <button aria-label="Солнце"><svg viewBox="0 0 20 20"><circle cx="8" cy="9" r="5" fill="#ffe9a0" stroke="#e2a42a" stroke-width="2"/><path d="M8 1v2M1 9h2M3 3l2 2M13 3l-1 2M3 15l2-2" stroke="#e2a42a" stroke-width="2"/><use href="#cross" x="8" y="7" width="12" height="12"/></svg></button>
            <button aria-label="Тени"><svg viewBox="0 0 20 20"><path d="M1 16h12" stroke="#777" stroke-width="3"/><circle cx="8" cy="8" r="6" fill="#d8ebf8" stroke="#4a8fc4" stroke-width="2"/><use href="#cross" x="8" y="7" width="12" height="12"/></svg></button>
            <button aria-label="Обрезка"><svg viewBox="0 0 20 20"><path d="M4 17V5h14M4 12h10V5M14 1v4M0 14h4" fill="none" stroke="#2b70b8" stroke-width="3"/><use href="#cross" x="8" y="7" width="12" height="12"/></svg></button>
            <button aria-label="Граница"><svg viewBox="0 0 20 20"><path d="M4 17V5h9M4 11h7v5M0 14h4" fill="none" stroke="#2b70b8" stroke-width="3"/><circle cx="15" cy="7" r="4" fill="#d8ebf8" stroke="#4a8fc4" stroke-width="1.500"/><path d="M15 11v6" stroke="#4a8fc4" stroke-width="3"/></svg></button>
            <button aria-label="Изоляция"><svg viewBox="0 0 20 20"><path d="M1 5c4-2 3 5 5 7 2 3 6 1 5-2 2 4 8 4 8-1l-5-5-3 1M6 12c2-4 4-3 5-2" fill="none" stroke="#555" stroke-width="1.800"/></svg></button>
            <button aria-label="Скрытые элементы"><svg viewBox="0 0 20 20"><circle cx="10" cy="7" r="4" fill="#d8ebf8" stroke="#3f8fd0" stroke-width="2"/><path d="M10 12v6" stroke="#3f78b0" stroke-width="3"/></svg></button>
            <button aria-label="Временные свойства"><svg viewBox="0 0 20 20"><path d="M1 5h13M1 5v10h8M16 4l3 2" fill="none" stroke="#888" stroke-width="1.500" stroke-dasharray="4 1"/><circle cx="14" cy="12" r="4" fill="#eee" stroke="#888" stroke-dasharray="3 1"/></svg></button>
            <button aria-label="Аналитика"><svg viewBox="0 0 20 20"><path d="M1 8h14M1 13h14M5 6v12M11 6v12M8 2h11M17 2v12" fill="none" stroke="#888" stroke-width="1.500" stroke-dasharray="3 1"/></svg></button>
            <button aria-label="Ограничения"><svg viewBox="0 0 20 20"><path d="M1 1v17M19 1v8M1 5h18" fill="none" stroke="#444" stroke-width="2"/><path d="M11 11h8v7h-8z" fill="#555"/><path d="M12 11c0-4 6-4 6 0" fill="none" stroke="#555" stroke-width="1.500"/></svg></button>
            <svg class="arrow" width="8" height="12" viewBox="0 0 8 12"><path d="M7 1L2 6l5 5"/></svg>
            <div class="track"><i class="thumb"></i></div>
            <svg class="arrow" width="8" height="12" viewBox="0 0 8 12"><path d="M1 1l5 5-5 5"/></svg>
        </div>
        <div class="corner"><i class="grip"></i></div>
    </section>

    <aside class="dock properties">
        <div class="dock-title">Свойства<button aria-label="Закрыть"><svg width="12" height="12" viewBox="0 0 12 12"><path d="M2 2l8 8M10 2L2 10" stroke="#111" stroke-width="2"/></svg></button></div>
        <div class="props">
            <div class="type">
                <select disabled aria-label="Тип"><option>Фасад: Восточный</option></select>
                <button disabled><svg width="18" height="16" viewBox="0 0 18 16"><path d="M1 3l1-2h6v12H1zM8 1h6l1 2v3M1 7h7M10 6h7v9h-7zM12 9h3M12 12h3" fill="none" stroke="#999" stroke-width="1.500"/></svg>Изменить тип</button>
            </div>
            <div class="list">
                <div class="rows">
                    <table>
                        <colgroup><col class="c-name"><col><col class="c-mark"></colgroup>
                        <tr class="group"><th colspan="3">Графика<svg width="8" height="10" viewBox="0 0 8 10"><path d="M1 4l3-3 3 3M1 9l3-3 3 3"/></svg></th></tr>
                        <tr><td>Масштаб вида</td><td class="in">1 : 100</td><td></td></tr>
                        <tr class="off"><td><span class="split">Значение масштаба<b>...</b></span></td><td>100</td><td></td></tr>
                        <tr><td>Отображение модели</td><td>Нормально</td><td></td></tr>
                        <tr><td>Уровень детализации</td><td>Высокий</td><td></td></tr>
                        <tr><td>Видимость частей</td><td>Показать оригинал</td><td></td></tr>
                        <tr><td>Переопределения ви...</td><td><button disabled>Изменить...</button></td><td></td></tr>
                        <tr><td>Параметры отображе...</td><td><button disabled>Изменить...</button></td><td></td></tr>
                        <tr><td>Скрыть при масштаба...</td><td class="in">1 : 5000</td><td></td></tr>
                        <tr><td>Дисциплина</td><td>Архитектура</td><td></td></tr>
                        <tr><td>Показать невидимые ...</td><td>По категории</td><td></td></tr>
                        <tr><td>Положение цветовой ...</td><td>Задний план</td><td></td></tr>
                        <tr><td>Цветовая схема</td><td><button disabled>&lt;нет&gt;</button></td><td></td></tr>
                        <tr><td>Графический стиль ра...</td><td>Нет</td><td></td></tr>
                        <tr class="off"><td>Метка связи</td><td></td><td></td></tr>
                        <tr><td><label for="sun">Траектория солнца</label></td><td><input id="sun" type="checkbox" disabled></td><td></td></tr>
                        <tr class="group"><th colspan="3">Границы<svg width="8" height="10" viewBox="0 0 8 10"><path d="M1 4l3-3 3 3M1 9l3-3 3 3"/></svg></th></tr>
                        <tr><td><label for="crop">Обрезать вид</label></td><td><input id="crop" type="checkbox" disabled></td><td></td></tr>
                        <tr><td><label for="border">Показать границу обр...</label></td><td><input id="border" type="checkbox" disabled></td><td></td></tr>
                        <tr><td><label for="notes">Обрезать аннотации</label></td><td><input id="notes" type="checkbox" disabled></td><td></td></tr>
                        <tr><td>Отсечение дальней п...</td><td><button disabled>Без подрезки</button></td><td></td></tr>
                        <tr class="off"><td>Смещение дальнего п...</td><td>26874.2</td><td></td></tr>
                        <tr><td>Область видимости</td><td>Нет</td><td></td></tr>
                        <tr><td>Связанная плоскость</td><td>Нет</td><td></td></tr>
                        <tr class="group"><th colspan="3">Идентификация<svg width="8" height="10" viewBox="0 0 8 10"><path d="M1 4l3-3 3 3M1 9l3-3 3 3"/></svg></th></tr>
                        <tr><td>Шаблон вида</td><td><button disabled>&lt;Нет&gt;</button></td><td></td></tr>
                    </table>
                </div>
                <div class="vscroll"><svg width="12" height="8" viewBox="0 0 12 8"><path d="M1 7l5-5 5 5"/></svg><i class="thumb"></i><svg width="12" height="8" viewBox="0 0 12 8"><path d="M1 1l5 5 5-5"/></svg></div>
            </div>
        </div>
    </aside>
</main>

<footer class="status">
    <span class="hint">ВЕРТИКАЛЬНО</span>
    <svg width="22" height="20" viewBox="0 0 22 20"><path d="M1 9h5v10H1zM8 8h5v11H8zM15 9h5v10h-5zM7 1h7v5H7z" fill="#999" stroke="#bbb"/><path d="M3 8l5-4M18 8l-5-4" stroke="#999"/></svg>
    <select disabled aria-label="Рабочие наборы"><option></option></select>
    <span class="count"><svg width="20" height="20" viewBox="0 0 20 20"><path d="M5 1h12v6H5z" fill="#ddd" stroke="#999"/><path d="M13 8l-5 6M1 15h9v4H1z" fill="#999" stroke="#999" stroke-width="2"/></svg>:0</span>
    <svg width="20" height="20" viewBox="0 0 20 20"><path d="M1 1h18v18H1z" fill="#f4f4f4" stroke="#333" stroke-width="1.500"/><path d="M1 3h18" stroke="#333" stroke-width="4"/><path d="M4 9h3M9 9h7M9 12h7M9 15h7M5 9v4h3" stroke="#333" stroke-width="1.500" fill="none"/></svg>
    <svg width="20" height="20" viewBox="0 0 20 20"><path d="M2 1h17v17H2z" fill="#a9a9a9"/><path d="M1 11h9M7 7l4 4-4 4" stroke="#e8e8e8" stroke-width="2" fill="none"/></svg>
    <select class="model" disabled aria-label="Вариант"><option>Главная модель</option></select>
    <div class="picks">
        <button aria-label="Выбор связей"><svg viewBox="0 0 20 20"><path d="M1 3h10v5H1z" fill="#f0c040" stroke="#b98a1d"/><use href="#cross" x="9" y="0" width="11" height="11"/><use href="#pointer" x="6" y="6" width="9" height="14"/></svg></button>
        <button aria-label="Выбор подложки"><svg viewBox="0 0 20 20"><path d="M1 8l8-6h9l-4 6zM1 15l4-5h8M1 18h11l2-3" fill="#cfe3f5" stroke="#2b70b8" stroke-width="1.500"/><use href="#pointer" x="10" y="6" width="9" height="14"/></svg></button>
        <button aria-label="Выбор закреплённых"><svg viewBox="0 0 20 20"><path d="M2 1h11v3l-2 2v4h3v3H1v-3h3V6L2 4zM7 13v6" fill="#eda05c" stroke="#b5591b" stroke-width="1.500"/><use href="#pointer" x="10" y="6" width="9" height="14"/></svg></button>
        <button aria-label="Выбор по граням"><svg viewBox="0 0 20 20"><path d="M2 4l9-3v14l-9 4z" fill="#a9d2f3" stroke="#2b70b8" stroke-width="1.500"/><use href="#pointer" x="10" y="6" width="9" height="14"/></svg></button>
        <button aria-label="Перетаскивание"><svg viewBox="0 0 20 20"><path d="M6 0v12M0 6h12M4 2l2-2 2 2M4 10l2 2 2-2" stroke="#222" stroke-width="1.500" fill="none"/><use href="#cross" x="10" y="0" width="10" height="10"/><use href="#pointer" x="10" y="6" width="9" height="14"/></svg></button>
        <button disabled aria-label="Фоновые процессы"><svg viewBox="0 0 20 20"><circle cx="10" cy="10" r="6" fill="none" stroke="#a8a8a8" stroke-width="4" stroke-dasharray="4 1"/></svg></button>
        <button class="filter"><svg viewBox="0 0 20 20"><path d="M1 2h18l-7 8v9H8v-9z" fill="#c9ced6" stroke="#555" stroke-width="1.500"/></svg>:0</button>
    </div>
    <i class="grip"></i>
</footer>

</body>
</html>
```

FILE: styles.css
```
* {
    box-sizing: border-box;
}

body {
    margin: 0;
    height: 100vh;
    display: flex;
    flex-direction: column;
    overflow: hidden;
    background: #f0f0f0;
    border-top: 1px solid #35258a;
    border-bottom: 1px solid #9b4a78;
    font-family: "Noto Sans", "Open Sans", sans-serif;
    font-size: 14px;
    color: #333;
}

button {
    padding: 0;
    border: 0;
    background: none;
    font: inherit;
    color: inherit;
    display: flex;
    align-items: center;
    justify-content: center;
}

select, input {
    font: inherit;
    margin: 0;
}

svg {
    flex: none;
    display: block;
}

.defs {
    position: absolute;
    width: 0;
    height: 0;
}

.caret {
    border: 4px solid transparent;
    border-top: 5px solid #444;
    border-bottom: 0;
}

.caret.big {
    border-width: 6px 5px 0;
}

.sep {
    width: 1px;
    height: 26px;
    margin: 0 4px;
    background: #c4c4c4;
}

/* title bar */
.titlebar {
    flex: none;
    height: 37px;
    padding-bottom: 2px;
    display: flex;
    align-items: center;
    background: #d3d3d3;
}

.quick, .service, .window {
    display: flex;
    align-items: center;
    flex: none;
}

.quick button {
    width: 30px;
    height: 28px;
}

.quick .logo {
    width: 40px;
}

.quick .slim {
    width: 28px;
}

.quick .more {
    width: 16px;
    flex-direction: column;
    gap: 3px;
}

.bar {
    width: 10px;
    height: 2px;
    background: #444;
}

.quick .letter {
    font-size: 24px;
    font-weight: bold;
    line-height: 28px;
    color: #444;
}

.on {
    background: #b5d1ee;
    border: 2px solid #1f66c2;
}

.caption {
    flex: 1;
    display: flex;
    gap: 32px;
    padding-left: 36px;
    white-space: nowrap;
    overflow: hidden;
}

.play {
    border: 5px solid transparent;
    border-left: 6px solid #333;
    border-right: 0;
    margin-right: 6px;
}

.search {
    width: 226px;
    height: 28px;
    padding: 0 4px;
    border: 2px solid #111;
    background: #fff;
    font-style: italic;
    font-size: 13px;
}

.search::placeholder {
    color: #777;
}

.service button {
    width: 29px;
    height: 28px;
}

.service .signin {
    width: auto;
    gap: 7px;
    padding: 0 7px 0 6px;
    white-space: nowrap;
}

.service .more {
    width: 22px;
}

.service .sep {
    margin: 0 6px;
}

.q {
    font-size: 17px;
    font-weight: bold;
    fill: #2b58b8;
}

.window {
    margin-left: 15px;
}

.window button {
    width: 31px;
    height: 28px;
}

/* tabs */
.tabs {
    flex: none;
    height: 27px;
    display: flex;
    align-items: flex-end;
    background: #d3d3d3;
    white-space: nowrap;
}

.tabs a {
    height: 26px;
    line-height: 28px;
    padding: 0 14px 0 13px;
    color: #444;
    text-decoration: none;
}

.tabs .file {
    padding: 0 1px 0 5px;
    color: #f4f4f4;
}

.tabs .current {
    padding: 0 12px;
    background: #e4efd8;
    color: #222;
}

.collapse {
    height: 26px;
    gap: 6px;
    margin-left: 28px;
}

/* ribbon */
.ribbon {
    flex: none;
    display: grid;
    grid-template-columns: 82px 79px 125px 128px 304px 83px 82px 102px 117px 177px 196px 312px 230px;
    margin: 0 3px 0 5px;
    overflow: hidden;
    background: #f5f5f5;
    border-top: 3px solid #fafafa;
}

.panel {
    border-right: 2px solid #ececec;
}

.body {
    height: 95px;
    display: flex;
    align-items: flex-start;
    justify-content: center;
}

.panel h2 {
    margin: 0;
    height: 22px;
    line-height: 20px;
    font-size: 14px;
    font-weight: normal;
    text-align: center;
    white-space: nowrap;
    display: flex;
    align-items: center;
    justify-content: center;
    gap: 8px;
}

.context {
    border-right: 2px solid #eef4e6;
}

.context h2 {
    background: #e1edd3;
}

.large {
    flex: 1;
    flex-direction: column;
    line-height: 20px;
    text-align: center;
    white-space: nowrap;
    padding-top: 3px;
}

.large svg {
    margin-bottom: 6px;
}

.large:disabled, .offsets button:disabled {
    color: #b4b4b4;
}

.large .caret {
    border-top-color: #999;
    margin-top: 2px;
}

.paste {
    flex: none;
    width: 88px;
}

.points {
    flex: none;
    width: 120px;
}

.plane {
    flex: none;
    width: 144px;
    margin-right: auto;
}

.pair {
    display: grid;
    grid-auto-rows: 44px;
    align-items: center;
    justify-items: center;
    padding-top: 1px;
}

.pair .on {
    width: 47px;
    height: 41px;
}

.one { grid-template-columns: 48px; }
.two { grid-template-columns: 48px 48px; }
.four { grid-template-columns: repeat(4, 50px); }
.measure { grid-template-columns: 48px 16px; }

.small {
    display: grid;
    grid-auto-rows: 31px;
    align-items: center;
    justify-items: center;
}

.small svg {
    width: 20px;
    height: 20px;
}

.clip { grid-template-columns: 28px; }
.geometry { grid-template-columns: 32px 14px 32px 32px 14px; }
.three { grid-template-columns: 31px 31px 31px; }
.view { grid-template-columns: 32px 12px 32px; }

button:disabled .caret {
    border-top-color: #999;
}

.offsets {
    flex: 1;
}

.offsets button {
    height: 45px;
    gap: 4px;
    white-space: nowrap;
}

/* options bar */
.options {
    flex: none;
    height: 33px;
    display: flex;
    align-items: center;
    gap: 7px;
    padding: 0 15px 0 10px;
    margin-left: 5px;
    background: #e4efd8;
    color: #222;
}

.mode {
    width: 236px;
    line-height: 28px;
    border-right: 1px solid #999;
    margin-right: 4px;
}

.options label {
    display: flex;
    align-items: center;
    gap: 5px;
}

.options .off {
    color: #999;
}

input[type="checkbox"] {
    appearance: none;
    width: 16px;
    height: 16px;
    background: #fff;
    border: 1px solid #333;
    display: block;
}

input[type="checkbox"]:checked::before {
    content: "";
    display: block;
    width: 5px;
    height: 9px;
    margin: 1px auto;
    border: solid #333;
    border-width: 0 2px 2px 0;
    transform: rotate(40deg);
}

input[type="checkbox"]:disabled {
    border-color: #ddd;
}

/* docked panels */
.workspace {
    flex: 1;
    min-height: 0;
    display: grid;
    grid-template-columns: 380px 1fr 393px;
    gap: 5px;
    padding-bottom: 2px;
}

.dock {
    display: flex;
    flex-direction: column;
    min-width: 0;
    min-height: 0;
}

.browser {
    padding: 0 1px 0 5px;
    background: #f5f5f5;
}

.dock-title {
    flex: none;
    height: 26px;
    display: flex;
    align-items: center;
    justify-content: space-between;
    padding: 0 5px 0 4px;
    background: #c1cddc;
    font-size: 13px;
    color: #222;
}

.tree {
    flex: 1;
    margin-top: 2px;
    border-top: 2px solid #777;
    border-left: 1px solid #777;
    background: #fff;
    font-size: 14px;
    color: #222;
}

.tree ul {
    list-style: none;
    margin: 0;
    padding: 0;
    background: repeating-linear-gradient(#999 0 1px, #fff 1px 3px) no-repeat;
}

.tree .root {
    background-position: 10px 11px;
    background-size: 1px calc(100% - 22px);
}

.tree .second {
    padding-left: 26px;
    background-position: 36px 0;
    background-size: 1px calc(100% - 99px);
}

.tree .third {
    padding-left: 26px;
    background-position: 36px 0;
    background-size: 1px calc(100% - 11px);
}

.node {
    height: 22px;
    display: flex;
    align-items: center;
    padding-left: 4px;
    white-space: nowrap;
}

.node svg {
    width: 20px;
    height: 20px;
    margin-right: 6px;
}

.node span {
    padding: 0 2px;
    margin-left: -2px;
    line-height: 21px;
}

.third .node::before {
    content: "";
    width: 17px;
    margin: 0 3px 0 8px;
    border-top: 1px dotted #999;
}

.picked {
    font-weight: bold;
    color: #000;
    background: #dedede;
}

.exp {
    width: 13px;
    height: 13px;
    border: 1px solid #999;
    background: linear-gradient(#456, #456) center / 9px 1px no-repeat #f4f4f4;
}

.exp.plus {
    background: linear-gradient(#456, #456) center / 9px 1px no-repeat, linear-gradient(#456, #456) center / 1px 9px no-repeat #f4f4f4;
}

.twig {
    width: 9px;
    border-top: 1px dotted #999;
}

.twig.wide {
    width: 13px;
    margin-right: 2px;
}

.twig.long {
    width: 15px;
    margin-left: 7px;
}

/* view window */
.view-window {
    display: grid;
    grid-template: 1fr 22px / 1fr 23px;
    border-left: 1px solid #666;
    border-top: 1px solid #666;
    background: #f0f0f0;
    min-width: 0;
    min-height: 0;
}

.canvas {
    position: relative;
    background: #fff;
    overflow: hidden;
    min-height: 0;
}

.drawing {
    position: absolute;
    inset: 0;
}

.lines path {
    fill: none;
    stroke: #222;
}

.ghost path {
    fill: none;
    stroke: #7fc0da;
    stroke-dasharray: 12 7;
}

.axis {
    stroke: #2f9140;
    stroke-dasharray: 17 18;
    stroke-dashoffset: 4;
}

.dim {
    fill: none;
    stroke: #8b93e6;
}

.mdi {
    position: absolute;
    top: 8px;
    right: 4px;
    display: flex;
    gap: 6px;
}

.navbar {
    position: absolute;
    top: 29px;
    right: 2px;
    width: 34px;
    height: 117px;
    padding: 2px 3px 2px;
    display: flex;
    flex-direction: column;
    align-items: center;
    gap: 4px;
    border: 2px solid #bdbdbd;
    border-radius: 5px;
    background: #f4f4f4;
}

.navbar .caret {
    border-width: 3px 2px 0;
    border-top-color: #888;
}

.navbar hr {
    width: 100%;
    margin: 0;
    border: 0;
    border-top: 1px solid #ccc;
}

.knob {
    width: 8px;
    height: 8px;
    border: 2px solid #bbb;
    border-radius: 50%;
    align-self: flex-end;
    margin-bottom: 4px;
}

.knob.last {
    margin: auto 0 0;
}

.two {
    font-size: 10px;
    font-weight: bold;
    fill: #9aabbf;
}

.vscroll {
    display: flex;
    flex-direction: column;
    align-items: center;
    padding: 8px 3px 8px 1px;
    background: #f0f0f0;
}

.vscroll path, .arrow path {
    fill: none;
    stroke: #444;
    stroke-width: 2;
}

.vscroll .thumb {
    width: 100%;
    height: 21px;
    margin: 359px 0 auto;
    background: #cdcdcd;
}

.viewbar {
    display: flex;
    align-items: center;
    font-size: 13px;
}

.scale {
    width: 89px;
    padding-left: 27px;
    color: #111;
}

.viewbar button {
    width: 25px;
}

.viewbar button svg {
    width: 19px;
    height: 19px;
}

.viewbar .arrow {
    margin: 0 7px;
}

.track {
    flex: 1;
    height: 20px;
}

.track .thumb {
    display: block;
    width: 21px;
    height: 20px;
    margin-left: 49%;
    background: #cdcdcd;
}

.grip {
    width: 12px;
    height: 12px;
    background: radial-gradient(#b4b4b4 0 1px, transparent 2px) 0 0 / 4px 4px;
    clip-path: polygon(100% 0, 100% 100%, 0 100%);
}

.corner {
    display: flex;
    align-items: flex-end;
    justify-content: center;
}

/* properties */
.properties {
    padding-right: 1px;
}

.props {
    flex: 1;
    min-height: 0;
    display: flex;
    flex-direction: column;
    margin-top: 2px;
    padding: 88px 2px 31px 0;
    border-top: 2px solid #777;
    border-left: 2px solid #777;
}

.type {
    display: flex;
    align-items: flex-start;
    height: 30px;
}

.type select {
    width: 256px;
    height: 28px;
    padding-left: 2px;
    background-color: #cbcbcb;
}

select {
    appearance: none;
    border: 0;
    border-radius: 0;
    padding: 0 4px;
    color: #888;
    opacity: 1;
    background: #fff url("data:image/svg+xml,%3Csvg xmlns='http://www.w3.org/2000/svg' width='10' height='6'%3E%3Cpath d='M1 1l4 4 4-4' fill='none' stroke='%23aaa'/%3E%3C/svg%3E") right 5px center no-repeat;
}

.type button {
    flex: 1;
    height: 26px;
    gap: 4px;
    color: #aaa;
    white-space: nowrap;
}

.list {
    flex: 1;
    min-height: 0;
    display: grid;
    grid-template-columns: 1fr 21px;
    overflow: hidden;
}

.rows {
    min-height: 0;
    overflow: hidden;
}

table {
    width: 100%;
    table-layout: fixed;
    border-collapse: collapse;
}

.c-name { width: 176px; }
.c-mark { width: 15px; }

tr {
    height: 24px;
}

td, th {
    height: 24px;
    padding: 0 0 0 2px;
    line-height: 20px;
    font-weight: normal;
    text-align: left;
    white-space: nowrap;
    overflow: hidden;
    color: #444;
    border-right: 1px dotted #888;
    border-bottom: 1px dotted #888;
}

td:first-child {
    padding-left: 9px;
}

td.in {
    padding-left: 6px;
}

.off td {
    color: #888;
}

.split {
    display: flex;
    justify-content: space-between;
}

.split b {
    font-weight: normal;
}

td button {
    width: 100%;
    height: 22px;
    background: #cbcbcb;
    border-right: 2px solid #bbb;
    border-bottom: 2px solid #bbb;
    color: #999;
}

td:has(button) {
    padding-left: 1px;
}

.group th {
    background: #dcdcdc;
    color: #222;
    border: 0;
    padding: 0 6px 0 1px;
}

.group svg {
    float: right;
    margin-top: 3px;
}

.group path {
    fill: none;
    stroke: #111;
    stroke-width: 1.5;
}

.list .thumb {
    flex: none;
    height: 411px;
    margin: 6px 0 auto;
}

/* status bar */
.status {
    flex: none;
    height: 34px;
    display: flex;
    align-items: center;
    gap: 10px;
    padding: 0 4px 4px 7px;
    background: #d3d3d3;
    border-top: 2px solid #8a8a8a;
}

.hint {
    width: 513px;
    font-size: 13px;
}

.status select {
    width: 255px;
    height: 22px;
    margin-left: -2px;
}

.count {
    display: flex;
    gap: 3px;
    width: 47px;
}

.picks {
    display: flex;
    margin-left: auto;
    margin-right: 70px;
}

.picks button {
    width: 30px;
}

.picks svg {
    width: 20px;
    height: 20px;
}

.picks .filter {
    width: auto;
    padding-left: 3px;
}
```
